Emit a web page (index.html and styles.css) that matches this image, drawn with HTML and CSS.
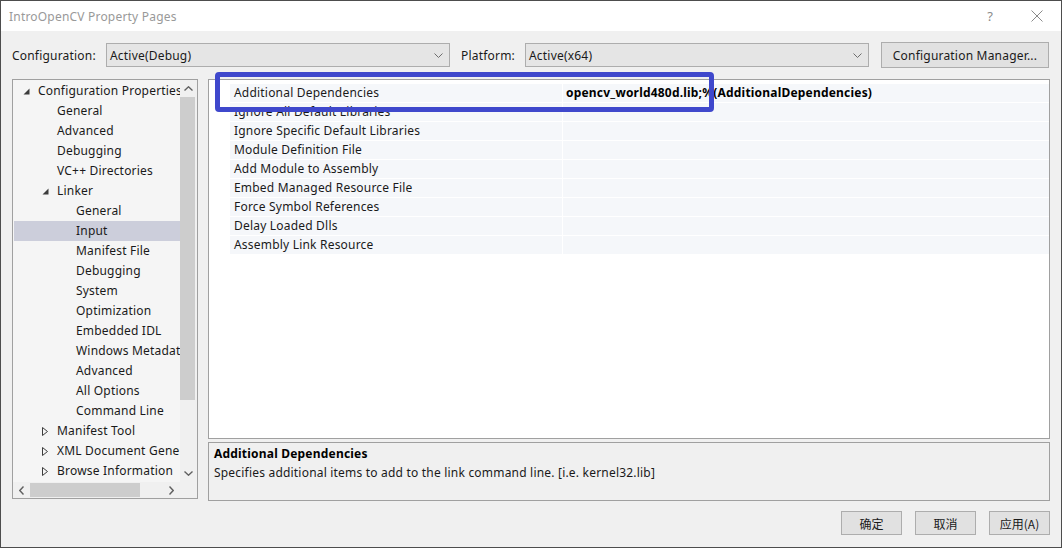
FILE: index.html
```html
<!DOCTYPE html>
<html>
<head>
<meta charset="utf-8">
<link rel="stylesheet" href="styles.css">
</head>
<body>
<div class="window">
  <div class="titlebar">
    <span class="title">IntroOpenCV Property Pages</span>
    <span class="help">?</span>
    <svg class="close" width="12" height="12" viewBox="0 0 12 12"><path d="M0.5 0.5 L11.5 11.5 M11.5 0.5 L0.5 11.5" stroke="#8a8a8a" stroke-width="1" fill="none"/></svg>
  </div>
  <div class="content">
    <div class="config-row">
      <span class="lbl lbl-config">Configuration:</span>
      <div class="select">
        <span>Active(Debug)</span>
        <svg width="9" height="5" viewBox="0 0 9 5"><path d="M0.5 0.5 L4.5 4.5 L8.5 0.5" stroke="#6d6d6d" fill="none"/></svg>
      </div>
      <span class="lbl lbl-platform">Platform:</span>
      <div class="select">
        <span>Active(x64)</span>
        <svg width="9" height="5" viewBox="0 0 9 5"><path d="M0.5 0.5 L4.5 4.5 L8.5 0.5" stroke="#6d6d6d" fill="none"/></svg>
      </div>
      <div class="btn btn-manager">Configuration Manager...</div>
    </div>

    <div class="main">
      <div class="tree">
        <div class="tree-items">
          <div class="item l0"><svg class="exp" width="7" height="7" viewBox="0 0 7 7"><path d="M6.5 0.5 L6.5 6.5 L0.5 6.5 Z" fill="#3c3c3c"/></svg>Configuration Properties</div>
          <div class="item l1">General</div>
          <div class="item l1">Advanced</div>
          <div class="item l1">Debugging</div>
          <div class="item l1">VC++ Directories</div>
          <div class="item l1a"><svg class="exp" width="7" height="7" viewBox="0 0 7 7"><path d="M6.5 0.5 L6.5 6.5 L0.5 6.5 Z" fill="#3c3c3c"/></svg>Linker</div>
          <div class="item l2">General</div>
          <div class="item l2 selected">Input</div>
          <div class="item l2">Manifest File</div>
          <div class="item l2">Debugging</div>
          <div class="item l2">System</div>
          <div class="item l2">Optimization</div>
          <div class="item l2">Embedded IDL</div>
          <div class="item l2">Windows Metadata</div>
          <div class="item l2">Advanced</div>
          <div class="item l2">All Options</div>
          <div class="item l2">Command Line</div>
          <div class="item l1a"><svg class="col" width="6" height="9" viewBox="0 0 6 9"><path d="M0.5 0.5 L5.5 4.5 L0.5 8.5 Z" stroke="#3c3c3c" fill="none"/></svg>Manifest Tool</div>
          <div class="item l1a"><svg class="col" width="6" height="9" viewBox="0 0 6 9"><path d="M0.5 0.5 L5.5 4.5 L0.5 8.5 Z" stroke="#3c3c3c" fill="none"/></svg>XML Document Generator</div>
          <div class="item l1a"><svg class="col" width="6" height="9" viewBox="0 0 6 9"><path d="M0.5 0.5 L5.5 4.5 L0.5 8.5 Z" stroke="#3c3c3c" fill="none"/></svg>Browse Information</div>
        </div>
        <div class="vscroll">
          <div class="sb-arrow"><svg width="9" height="5" viewBox="0 0 9 5"><path d="M0.5 4.5 L4.5 0.8 L8.5 4.5" stroke="#606060" stroke-width="1.4" fill="none"/></svg></div>
          <div class="vthumb-track"><div class="vthumb"></div></div>
          <div class="sb-arrow"><svg width="9" height="5" viewBox="0 0 9 5"><path d="M0.5 0.5 L4.5 4.2 L8.5 0.5" stroke="#606060" stroke-width="1.4" fill="none"/></svg></div>
        </div>
        <div class="hscroll">
          <div class="sb-arrow-h"><svg width="5" height="9" viewBox="0 0 5 9"><path d="M4.5 0.5 L0.8 4.5 L4.5 8.5" stroke="#606060" stroke-width="1.4" fill="none"/></svg></div>
          <div class="hthumb-track"><div class="hthumb"></div></div>
          <div class="sb-arrow-h"><svg width="5" height="9" viewBox="0 0 5 9"><path d="M0.5 0.5 L4.2 4.5 L0.5 8.5" stroke="#606060" stroke-width="1.4" fill="none"/></svg></div>
        </div>
        <div class="corner"></div>
      </div>

      <div class="right">
        <div class="grid">
          <div class="row"><div class="gutter"></div><div class="name">Additional Dependencies</div><div class="value bold">opencv_world480d.lib;%(AdditionalDependencies)</div></div>
          <div class="row"><div class="gutter"></div><div class="name">Ignore All Default Libraries</div><div class="value"></div></div>
          <div class="row"><div class="gutter"></div><div class="name">Ignore Specific Default Libraries</div><div class="value"></div></div>
          <div class="row"><div class="gutter"></div><div class="name">Module Definition File</div><div class="value"></div></div>
          <div class="row"><div class="gutter"></div><div class="name">Add Module to Assembly</div><div class="value"></div></div>
          <div class="row"><div class="gutter"></div><div class="name">Embed Managed Resource File</div><div class="value"></div></div>
          <div class="row"><div class="gutter"></div><div class="name">Force Symbol References</div><div class="value"></div></div>
          <div class="row"><div class="gutter"></div><div class="name">Delay Loaded Dlls</div><div class="value"></div></div>
          <div class="row"><div class="gutter"></div><div class="name">Assembly Link Resource</div><div class="value"></div></div>
        </div>
        <div class="desc">
          <div class="desc-title">Additional Dependencies</div>
          <div class="desc-text">Specifies additional items to add to the link command line. [i.e. kernel32.lib]</div>
        </div>
      </div>
    </div>

    <div class="footer">
      <div class="btn btn-dlg">确定</div>
      <div class="btn btn-dlg">取消</div>
      <div class="btn btn-dlg">应用(A)</div>
    </div>
  </div>
  <div class="highlight"></div>
</div>
</body>
</html>
```

FILE: styles.css
```css
html, body {
  margin: 0;
  padding: 0;
  background: #f0f0f0;
}

.window {
  position: relative;
  width: 1062px;
  height: 548px;
  box-sizing: border-box;
  border: 1px solid #4d4d4d;
  display: flex;
  flex-direction: column;
  font-family: "Noto Sans", "Noto Sans CJK SC", sans-serif;
  font-size: 12px;
  letter-spacing: 0.2px;
  color: #1a1a1a;
  overflow: hidden;
}

.titlebar {
  height: 30px;
  flex: none;
  background: #ffffff;
  display: flex;
  align-items: center;
  padding-left: 8px;
}

.title {
  color: #999999;
  font-size: 12px;
  flex: 1;
}

.help {
  color: #8a8a8a;
  font-size: 13px;
  margin-right: 38px;
}

.close {
  margin-right: 18px;
}

.content {
  flex: 1;
  background: #f0f0f0;
  display: flex;
  flex-direction: column;
}

.config-row {
  display: flex;
  align-items: center;
  height: 26px;
  margin-top: 11px;
  padding-left: 11px;
}

.lbl {
  flex: none;
  white-space: nowrap;
}

.lbl-config { width: 94px; }
.lbl-platform { width: 64px; margin-left: 11px; }

.select {
  width: 344px;
  height: 24px;
  box-sizing: border-box;
  border: 1px solid #adadad;
  background: #e5e5e5;
  display: flex;
  align-items: center;
  justify-content: space-between;
  padding: 0 6px 0 3px;
}

.btn {
  box-sizing: border-box;
  border: 1px solid #adadad;
  background: #e1e1e1;
  display: flex;
  align-items: center;
  justify-content: center;
  white-space: nowrap;
}

.btn-manager {
  width: 168px;
  height: 26px;
  margin-left: 12px;
}

.main {
  display: flex;
  margin-top: 11px;
  padding-left: 11px;
  gap: 10px;
}

/* Tree */
.tree {
  width: 186px;
  height: 420px;
  box-sizing: border-box;
  border: 1px solid #a0a0a0;
  display: grid;
  grid-template-columns: 1fr 17px;
  grid-template-rows: 1fr 16px;
  background: #f0f0f0;
}

.tree-items {
  background: #f5f5f5;
  overflow: hidden;
  padding: 1px 0 0 1px;
}

.item {
  height: 20px;
  line-height: 20px;
  white-space: nowrap;
  position: relative;
}

.item.l0 { padding-left: 24px; }
.item.l1 { padding-left: 43px; }
.item.l1a { padding-left: 43px; }
.item.l2 { padding-left: 62px; }

.item.selected {
  background: #cccedb;
}

.item .exp {
  position: absolute;
  top: 7px;
}
.item.l0 .exp { left: 9px; }
.item.l1a .exp { left: 28px; }
.item .col {
  position: absolute;
  top: 6px;
  left: 28px;
}

.vscroll {
  display: flex;
  flex-direction: column;
  background: #f0f0f0;
}

.sb-arrow {
  height: 17px;
  display: flex;
  align-items: center;
  justify-content: center;
}

.vthumb-track {
  flex: 1;
  padding: 0 2px 0 0;
}

.vthumb {
  height: 303px;
  background: #cdcdcd;
}

.hscroll {
  display: flex;
  background: #f0f0f0;
}

.sb-arrow-h {
  width: 17px;
  display: flex;
  align-items: center;
  justify-content: center;
}

.hthumb-track {
  flex: 1;
  padding: 1px 0;
}

.hthumb {
  width: 110px;
  height: 100%;
  background: #cdcdcd;
}

.corner { background: #f0f0f0; }

/* Right side */
.right {
  display: flex;
  flex-direction: column;
  gap: 3px;
}

.grid {
  width: 842px;
  height: 360px;
  box-sizing: border-box;
  border: 1px solid #a0a0a0;
  background: #ffffff;
  padding-top: 4px;
}

.row {
  display: flex;
  height: 19px;
  box-sizing: border-box;
  border-bottom: 1px solid #ffffff;
}

.gutter {
  width: 21px;
  flex: none;
  background: #ffffff;
}

.name {
  width: 332px;
  flex: none;
  background: #f5f7fa;
  padding-left: 4px;
  box-sizing: border-box;
  line-height: 18px;
  white-space: nowrap;
}

.value {
  flex: 1;
  background: #f5f7fa;
  border-left: 1px solid #ffffff;
  padding-left: 3px;
  line-height: 18px;
  white-space: nowrap;
}

.value.bold {
  font-weight: bold;
  color: #000;
}

.desc {
  width: 842px;
  height: 59px;
  box-sizing: border-box;
  border: 1px solid #a0a0a0;
  background: #f0f0f0;
  padding: 1px 5px;
}

.desc-title {
  font-weight: bold;
  color: #000;
  line-height: 19px;
}

.desc-text {
  line-height: 19px;
}

.footer {
  display: flex;
  justify-content: flex-end;
  gap: 13px;
  margin-top: 10px;
  padding-right: 11px;
}

.btn-dlg {
  width: 61px;
  height: 24px;
  letter-spacing: 0;
  font-family: "Noto Sans CJK SC", "Noto Sans", sans-serif;
}

.highlight {
  position: absolute;
  left: 214px;
  top: 71px;
  width: 499px;
  height: 40px;
  box-sizing: border-box;
  border: 5px solid #3f48cc;
  border-radius: 4px;
}
```
